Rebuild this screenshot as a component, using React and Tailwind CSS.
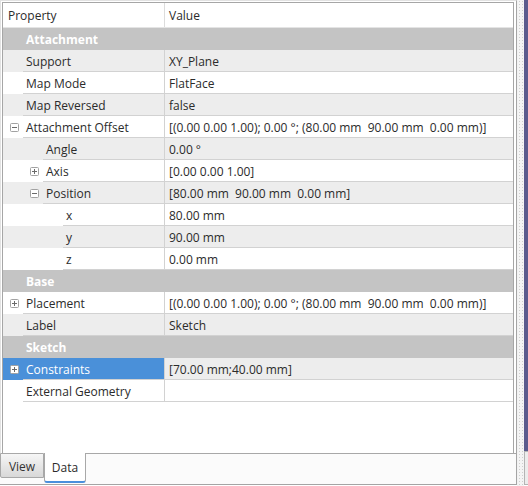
import React from "react";

const placementValue = "[(0.00 0.00 1.00); 0.00 °; (80.00 mm  90.00 mm  0.00 mm)]";

const rows = [
    { group: true, label: "Attachment" },
    { label: "Support", value: "XY_Plane", level: 1, alt: true },
    { label: "Map Mode", value: "FlatFace", level: 1 },
    { label: "Map Reversed", value: "false", level: 1, alt: true },
    { label: "Attachment Offset", value: placementValue, level: 1, toggle: "minus" },
    { label: "Angle", value: "0.00 °", level: 2, alt: true },
    { label: "Axis", value: "[0.00 0.00 1.00]", level: 2, toggle: "plus" },
    { label: "Position", value: "[80.00 mm  90.00 mm  0.00 mm]", level: 2, alt: true, toggle: "minus" },
    { label: "x", value: "80.00 mm", level: 3 },
    { label: "y", value: "90.00 mm", level: 3, alt: true },
    { label: "z", value: "0.00 mm", level: 3 },
    { group: true, label: "Base" },
    { label: "Placement", value: placementValue, level: 1, toggle: "plus" },
    { label: "Label", value: "Sketch", level: 1, alt: true },
    { group: true, label: "Sketch" },
    { label: "Constraints", value: "[70.00 mm;40.00 mm]", level: 1, alt: true, toggle: "plus", selected: true },
    { label: "External Geometry", value: "", level: 1 },
];

const indentClass = {
    1: "w-[20px]",
    2: "w-[40px]",
    3: "w-[60px]",
};

const Toggle = ({ kind }) => (
    <svg width="9" height="9" viewBox="0 0 9 9">
        <rect x="0.5" y="0.5" width="8" height="8" rx="1" fill="#ffffff" stroke="#a2a2a2" />
        <path d="M2 4.5h5" stroke="#6a6a6a" />
        {kind === "plus" && <path d="M4.5 2v5" stroke="#6a6a6a" />}
    </svg>
);

const Row = ({ row }) => {
    if (row.group) {
        return (
            <div className="h-[22px] flex items-center pt-[2px] bg-[#c4c4c4] pl-[23px] font-bold text-white">
                {row.label}
            </div>
        );
    }
    return (
        <div className={`flex h-[22px] ${row.alt ? "bg-[#ededed]" : "bg-white"}`}>
            <div
                className={`flex w-[162px] shrink-0 ${
                    row.selected ? "bg-[#4a90d9] text-white" : ""
                }`}
            >
                <div
                    className={`${indentClass[row.level]} shrink-0 flex items-center justify-end pr-[4px]`}
                >
                    {row.toggle && <Toggle kind={row.toggle} />}
                </div>
                <div className="flex-1 flex items-center pt-[2px] pl-[3px] border-b border-r border-[#d2d2d2] whitespace-nowrap">
                    {row.label}
                </div>
            </div>
            <div className="flex-1 flex items-center pt-[2px] pl-[4px] border-b border-[#d2d2d2] whitespace-pre">
                {row.value}
            </div>
        </div>
    );
};

export default function App() {
    return (
        <div className="flex w-[528px] h-[486px] bg-white font-['Open_Sans','Noto_Sans',sans-serif] text-[12px] text-[#2b2b2b]">
            <div className="flex flex-col w-[517px] shrink-0">
                {/* property table pane */}
                <div className="flex h-[453px] pt-[1px] pl-[1px] pr-[2px] border-t border-l border-r border-t-[#e2e2e2] border-l-[#e2e2e2] border-r-[#a4a4a4]">
                    <div className="flex-1 flex flex-col border-l border-t border-r border-[#a6a6a6] bg-white">
                        <div className="flex h-[25px] border-b border-[#e4e4e4] bg-white">
                            <div className="w-[162px] shrink-0 flex items-center pt-[2px] pl-[5px] border-r border-[#dcdcdc]">
                                Property
                            </div>
                            <div className="flex-1 flex items-center pt-[2px] pl-[4px]">Value</div>
                        </div>
                        {rows.map((row, i) => (
                            <Row key={i} row={row} />
                        ))}
                    </div>
                </div>

                {/* bottom tabs */}
                <div className="flex items-start h-[32px] bg-[#fbfbfb] border-r border-b border-[#a4a4a4]">
                    <div className="w-[44px] h-[25px] shrink-0 flex items-center justify-center pt-[2px] border border-[#a8a8a8] rounded-bl-[2px] bg-gradient-to-b from-[#f6f6f6] to-[#d8d8d8] text-[#333333]">
                        View
                    </div>
                    <div className="w-[42px] h-[30px] shrink-0 flex items-center justify-center pt-[2px] bg-white border-l border-r border-[#a8a8a8] border-b-2 border-b-[#4a8fdc] rounded-b-[3px] text-[#2b2b2b]">
                        Data
                    </div>
                    <div className="flex-1 h-px bg-[#a8a8a8]" />
                </div>
            </div>

            {/* splitter and side bar */}
            <div className="flex w-[11px] shrink-0">
                <div className="w-px bg-[#f2f2f2]" />
                <div className="w-[6px] bg-[#f4f4f4] bg-[radial-gradient(#cfcfcf_0.8px,transparent_0.8px)] bg-[length:3px_3px]" />
                <div className="flex-1 flex flex-col">
                    <div className="h-[451px] bg-[#5b5b8d]" />
                    <div className="flex-1 bg-[#ececec] border-l border-t border-b border-[#b4b4b4] mb-[1px]" />
                </div>
            </div>
        </div>
    );
}
